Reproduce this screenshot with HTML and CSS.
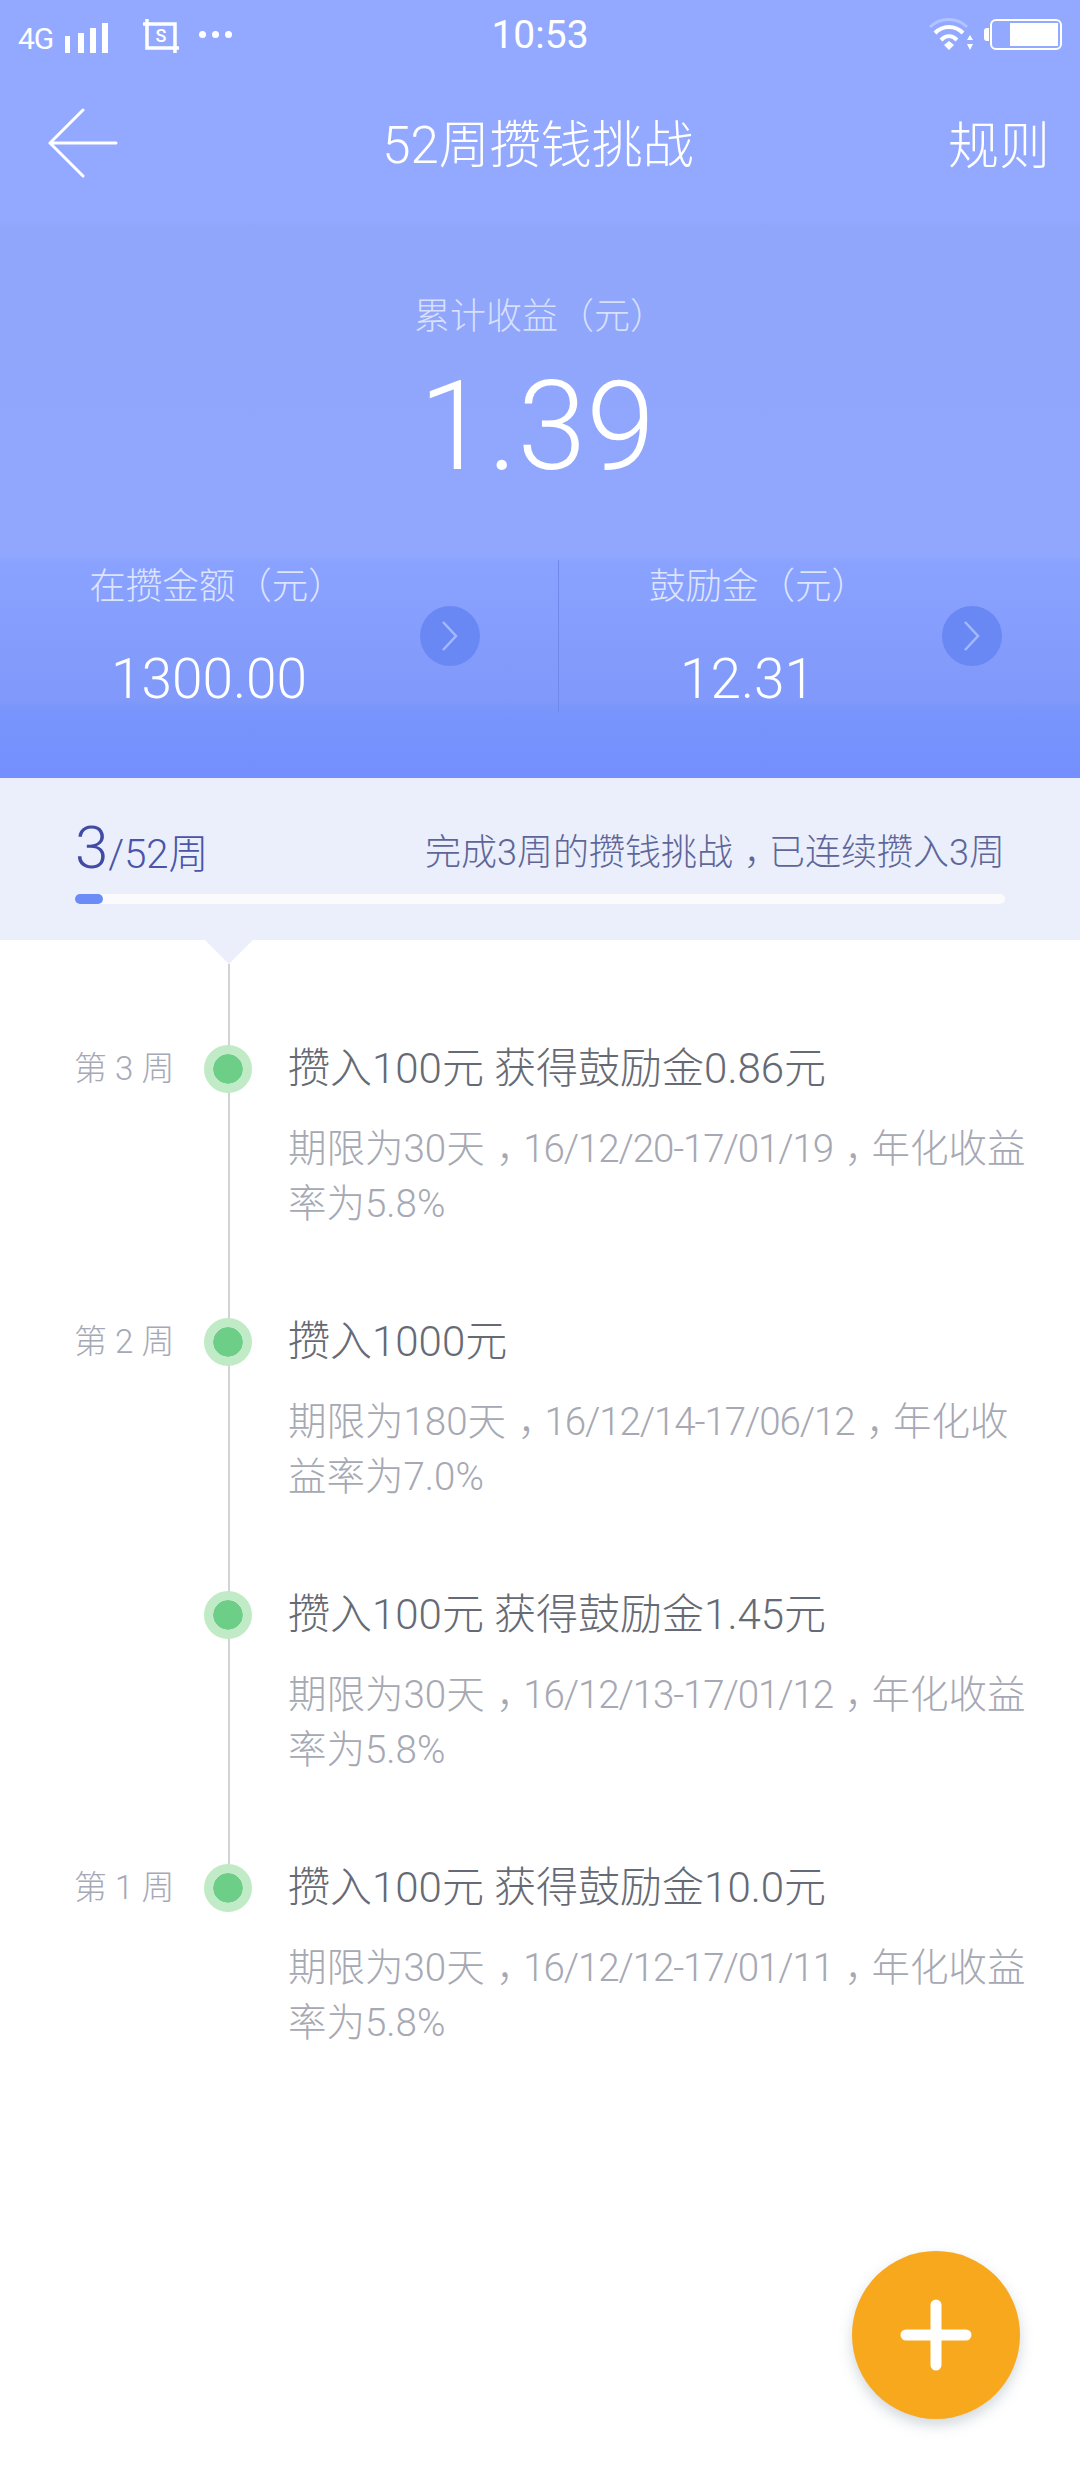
FILE: index.html
```html
<!DOCTYPE html>
<html lang="zh-CN">
<head>
<meta charset="utf-8">
<title>52周攒钱挑战</title>
<link rel="stylesheet" href="styles.css">
</head>
<body>
<div class="page">
  <header class="hero">
    <div class="status">
      <div class="status-left">
        <span class="net">4G</span>
        <svg class="signal" width="44" height="32" viewBox="0 0 44 32"><g fill="#fff"><rect x="0" y="13" width="5" height="17"/><rect x="13" y="10" width="6" height="20"/><rect x="25" y="5" width="6" height="25"/><rect x="37" y="0" width="6" height="30"/></g></svg>
        <svg class="shot" width="36" height="34" viewBox="0 0 36 34"><path d="M4 0V29H36M32 34V5H0" fill="none" stroke="#fff" stroke-width="3.5"/><text class="shot-s" x="18" y="23" text-anchor="middle">S</text></svg>
        <span class="dots"><i></i><i></i><i></i></span>
      </div>
      <div class="time">10:53</div>
      <div class="status-right">
        <svg class="wifi" width="46" height="36" viewBox="0 0 46 36"><g fill="none" stroke="#fff" stroke-linecap="butt"><path d="M1 9C11 -1 28 -1 38 9" stroke-opacity=".3" stroke-width="3"/><path d="M6 15C14 7 26 7 34 15" stroke-width="4"/><path d="M12 22C17 17 23 17 28 22" stroke-width="4"/></g><path d="M15 27L20 23L25 27L20 32Z" fill="#fff"/><path d="M38 22L41 17L44 22ZM38 26L44 26L41 32Z" fill="#fff"/></svg>
        <div class="battery"><span class="battery-fill"></span></div>
      </div>
    </div>
    <nav class="nav">
      <svg class="back" width="70" height="70" viewBox="0 0 70 70"><path d="M35 2L2 35L35 68M2 35H68" fill="none" stroke="#fff" stroke-width="3" stroke-linecap="round" stroke-linejoin="round"/></svg>
      <h1 class="title">52周攒钱挑战</h1>
      <a class="rules">规则</a>
    </nav>
    <section class="summary">
      <div class="summary-label">累计收益（元）</div>
      <div class="summary-value">1.39</div>
    </section>
    <section class="stats">
      <div class="stat stat-first">
        <div class="stat-body">
          <div class="stat-label">在攒金额（元）</div>
          <div class="stat-value">1300.00</div>
        </div>
        <span class="go"><svg width="18" height="30" viewBox="0 0 18 30"><path d="M2 1L15 15L2 29" fill="none" stroke="#a4b8ff" stroke-width="2.5"/></svg></span>
      </div>
      <div class="stat stat-second">
        <div class="stat-body">
          <div class="stat-label">鼓励金（元）</div>
          <div class="stat-value">12.31</div>
        </div>
        <span class="go"><svg width="18" height="30" viewBox="0 0 18 30"><path d="M2 1L15 15L2 29" fill="none" stroke="#a4b8ff" stroke-width="2.5"/></svg></span>
      </div>
    </section>
  </header>

  <section class="progress">
    <div class="progress-text">
      <div class="count"><span class="count-now">3</span><span class="count-all">/52周</span></div>
      <div class="progress-note">完成3周的攒钱挑战<span class="sep">，</span>已连续攒入3周</div>
    </div>
    <div class="track"><div class="track-fill"></div></div>
  </section>

  <main class="timeline">
    <article class="entry">
      <div class="week">第 3 周</div>
      <div class="node"></div>
      <div class="detail">
        <div class="entry-title">攒入100元 获得鼓励金0.86元</div>
        <div class="entry-desc">期限为30天<span class="sep">，</span><span class="date">16/12/20-17/01/19</span><span class="sep">，</span>年化收益<br>率为5.8%</div>
      </div>
    </article>
    <article class="entry">
      <div class="week">第 2 周</div>
      <div class="node"></div>
      <div class="detail">
        <div class="entry-title">攒入1000元</div>
        <div class="entry-desc">期限为180天<span class="sep">，</span><span class="date">16/12/14-17/06/12</span><span class="sep">，</span>年化收<br>益率为7.0%</div>
      </div>
    </article>
    <article class="entry">
      <div class="week"></div>
      <div class="node"></div>
      <div class="detail">
        <div class="entry-title">攒入100元 获得鼓励金1.45元</div>
        <div class="entry-desc">期限为30天<span class="sep">，</span><span class="date">16/12/13-17/01/12</span><span class="sep">，</span>年化收益<br>率为5.8%</div>
      </div>
    </article>
    <article class="entry entry-last">
      <div class="week">第 1 周</div>
      <div class="node"></div>
      <div class="detail">
        <div class="entry-title">攒入100元 获得鼓励金10.0元</div>
        <div class="entry-desc">期限为30天<span class="sep">，</span><span class="date">16/12/12-17/01/11</span><span class="sep">，</span>年化收益<br>率为5.8%</div>
      </div>
    </article>
  </main>

  <button class="fab" aria-label="add"><svg width="72" height="72" viewBox="0 0 72 72"><path d="M6 36H66M36 6V66" stroke="#fff" stroke-width="11" stroke-linecap="round"/></svg></button>
</div>
</body>
</html>
```

FILE: styles.css
```css
* { box-sizing: border-box; }
html, body { margin: 0; padding: 0; background: #fff; }
body { font-family: Roboto, "Noto Sans CJK SC", sans-serif; font-weight: 300; }
.page { position: relative; width: 1080px; height: 2479px; overflow: hidden; background: #fff; }

.hero {
  height: 778px;
  color: #fff;
  background: linear-gradient(180deg, #93a9ff 0, #93a9ff 222px, #8fa6fb 226px, #90a7fd 555px, #8aa2ff 563px, #8099fa 700px, #7795fc 712px, #748ffe 778px);
}

.status { height: 70px; padding: 0 18px; display: grid; grid-template-columns: 1fr auto 1fr; align-items: center; }
.status-left { display: flex; align-items: center; }
.net { font-size: 30px; font-weight: 400; letter-spacing: -1px; width: 47px; padding-top: 6px; }
.signal { margin-top: 7px; }
.shot { margin-left: 34px; margin-top: 2px; }
.shot-s { font-size: 18px; font-weight: 500; fill: #fff; }
.dots { display: flex; gap: 6px; margin-left: 20px; margin-top: -2px; }
.dots i { width: 7px; height: 7px; border-radius: 50%; background: #fff; }
.time { font-size: 39px; font-weight: 400; text-align: center; }
.status-right { display: flex; justify-content: flex-end; align-items: center; gap: 15px; }
.wifi { margin-top: 1px; }
.battery { position: relative; width: 72px; height: 31px; border: 2px solid #fff; border-radius: 6px; padding: 2px; display: flex; justify-content: flex-end; margin-top: -2px; }
.battery::before { content: ""; position: absolute; left: -8px; top: 7px; width: 5px; height: 13px; border-radius: 3px 0 0 3px; background: #fff; }
.battery-fill { width: 48px; background: #fff; }

.nav { height: 146px; padding: 0 30px 0 48px; display: flex; align-items: center; justify-content: space-between; }
.back { width: 70px; height: 70px; }
.title { margin: 0 0 4px 10px; font-size: 51px; font-weight: 300; }
.rules { font-size: 51px; font-weight: 300; margin-bottom: 2px; }

.summary { height: 344px; padding-top: 78px; text-align: center; }
.summary-label { font-size: 36px; line-height: 46px; color: rgba(255,255,255,.66); }
.summary-value { font-size: 124px; line-height: 140px; margin-top: 17px; padding-right: 6px; }

.stats { display: flex; height: 152px; }
.stat { display: flex; align-items: center; padding-right: 78px; }
.stat-first { width: 559px; border-right: 1px solid #7088ea; }
.stat-second { width: 521px; }
.stat-first .stat-body { padding-right: 2px; }
.stat-second .stat-body { padding-right: 6px; }
.stat-body { flex: 1; text-align: center; }
.stat-label { font-size: 36.5px; line-height: 48px; padding-left: 16px; color: rgba(255,255,255,.72); }
.stat-second .stat-label { padding-left: 22px; }
.stat-value { font-size: 55px; line-height: 60px; margin-top: 38px; }
.go { flex: none; width: 60px; height: 60px; border-radius: 50%; background: #6a88f4; display: flex; align-items: center; justify-content: center; }

.progress { position: relative; height: 162px; padding: 40px 75px 0; background: #ebeffc; }
.progress::after { content: ""; position: absolute; left: 205px; bottom: -24px; border-left: 24px solid transparent; border-right: 24px solid transparent; border-top: 24px solid #ebeffc; }
.progress-text { display: flex; align-items: flex-end; justify-content: space-between; height: 60px; }
.count { color: #4a55a8; line-height: 1; }
.count-now { font-size: 60px; color: #414ba6; }
.count-all { font-size: 40px; }
.progress-note { font-size: 36px; color: #5e6699; line-height: 50px; }
.track { height: 10px; margin-top: 16px; border-radius: 5px; background: #fbfbfd; }
.track-fill { width: 28px; height: 10px; border-radius: 5px; background: #6b8cf7; }
.sep { font-feature-settings: "halt"; padding: 0 .2em 0 .3em; }

.timeline { position: relative; padding-top: 105px; }
.timeline::before { content: ""; position: absolute; left: 228px; top: 24px; height: 923px; width: 2px; background: #d3d3d5; }
.entry { position: relative; display: grid; grid-template-columns: 74px 97px 116px 1fr; height: 273px; }
.week { grid-column: 2; font-size: 33px; line-height: 48px; color: #a6a9b5; white-space: nowrap; }
.node { grid-column: 3; width: 48px; height: 48px; margin-left: 33px; border-radius: 50%; background: #6dcf87; border: 9px solid #c0ebc6; background-clip: padding-box; }
.detail { grid-column: 4; padding-left: 1px; }
.entry-title { font-size: 42px; line-height: 48px; color: #666a75; white-space: nowrap; }
.entry-desc { margin-top: 28px; font-size: 38.5px; line-height: 55px; color: #a6a8b3; white-space: nowrap; }
.date { letter-spacing: -1.1px; }

.fab { position: absolute; left: 852px; top: 2251px; width: 168px; height: 168px; padding: 0; border: 0; border-radius: 50%; background: #f7a81d; box-shadow: 0 6px 14px rgba(90,110,130,.28); display: flex; align-items: center; justify-content: center; }
```
